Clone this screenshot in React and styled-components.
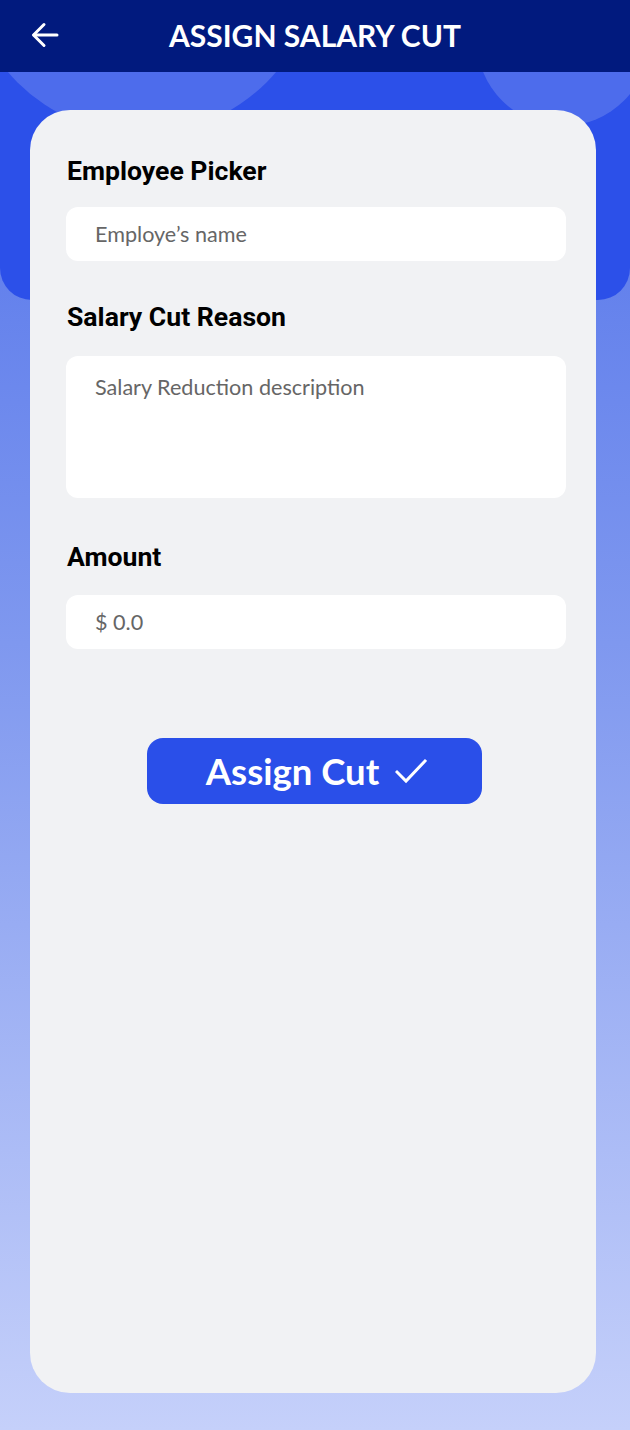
import React from "react";
import styled, { createGlobalStyle } from "styled-components";

const Global = createGlobalStyle`
  * { box-sizing: border-box; }
  html, body { margin: 0; padding: 0; }
  body { font-family: "Lato", "Roboto", sans-serif; }
`;

const Page = styled.div`
  width: 630px;
  min-height: 1430px;
  background: linear-gradient(180deg, #4f70ea 0%, #7f98ef 45%, #c5d0fa 100%);
  display: flex;
  flex-direction: column;
  overflow: hidden;
`;

const Header = styled.header`
  height: 72px;
  background: #011a7e;
  display: grid;
  grid-template-columns: 80px 1fr 80px;
  align-items: center;
  position: relative;
  z-index: 2;
`;

const BackButton = styled.button`
  border: 0;
  background: none;
  padding: 0 0 2px 30px;
  display: flex;
  align-items: center;
  cursor: pointer;
`;

const Title = styled.h1`
  margin: 0 0 2px;
  text-align: center;
  color: #fff;
  font-family: "Lato", sans-serif;
  font-weight: 700;
  font-size: 30px;
  line-height: 36px;
`;

const Body = styled.main`
  position: relative;
  flex: 1;
  padding: 38px 34px 37px 30px;
  display: flex;
`;

const Blob = styled.div`
  position: absolute;
  left: 0;
  right: 0;
  top: 0;
  height: 228px;
  background: #2c50e9;
  border-radius: 0 0 32px 32px;
  overflow: hidden;
  z-index: 0;
`;

const Circle = styled.div`
  position: absolute;
  border-radius: 50%;
  background: rgba(255, 255, 255, 0.16);
  left: ${(p) => p.$x - p.$r}px;
  top: ${(p) => p.$y - p.$r}px;
  width: ${(p) => p.$r * 2}px;
  height: ${(p) => p.$r * 2}px;
`;

const Card = styled.section`
  position: relative;
  z-index: 1;
  flex: 1;
  background: #f1f2f4;
  border-radius: 40px;
  padding: 46px 30px 0 36px;
  display: flex;
  flex-direction: column;
`;

const Label = styled.label`
  font-family: "Roboto", sans-serif;
  font-weight: 700;
  font-size: 26.6px;
  line-height: 30px;
  color: #000;
  margin: ${(p) => p.$top || 0}px 0 ${(p) => p.$bottom || 22}px 1px;
`;

const Field = styled.div`
  width: 500px;
  height: ${(p) => p.$h}px;
  background: #fff;
  border-radius: 12px;
  padding: ${(p) => (p.$multi ? "18px 29px" : "0 29px")};
  display: flex;
  align-items: ${(p) => (p.$multi ? "flex-start" : "center")};
  font-family: "Lato", sans-serif;
  font-size: 21.6px;
  line-height: 26px;
  color: #666;
`;

const ButtonRow = styled.div`
  display: flex;
  justify-content: center;
  margin-top: 89px;
  padding-right: 3px;
`;

const PrimaryButton = styled.button`
  width: 335px;
  height: 66px;
  border: 0;
  border-radius: 16px;
  background: #2a4fe9;
  color: #fff;
  font-family: "Lato", sans-serif;
  font-weight: 700;
  font-size: 36.5px;
  display: flex;
  align-items: center;
  justify-content: center;
  gap: 16px;
  padding: 0 0 0 4px;
  cursor: pointer;
`;

export default function App() {
  return (
    <Page>
      <Global />
      <Header>
        <BackButton aria-label="Back">
          <svg width="30" height="30" viewBox="0 0 30 30" fill="none" stroke="#fff" strokeWidth="3" strokeLinecap="round" strokeLinejoin="round">
            <path d="M27 15H4" />
            <path d="M14 4.5L3.5 15L14 25.5" />
          </svg>
        </BackButton>
        <Title>ASSIGN SALARY CUT</Title>
        <div />
      </Header>
      <Body>
        <Blob>
          <Circle $x={142} $y={-114} $r={176} />
          <Circle $x={563} $y={-32} $r={86} />
        </Blob>
        <Card>
          <Label $bottom={21}>Employee Picker</Label>
          <Field $h={54}>Employe’s name</Field>
          <Label $top={41} $bottom={24}>Salary Cut Reason</Label>
          <Field $h={142} $multi>Salary Reduction description</Field>
          <Label $top={44} $bottom={23}>Amount</Label>
          <Field $h={54}>$ 0.0</Field>
          <ButtonRow>
            <PrimaryButton>
              Assign Cut
              <svg width="32" height="26" viewBox="0 0 32 26" fill="none" stroke="#fff" strokeWidth="3" strokeLinecap="square">
                <path d="M2 14L11 23L30 3" />
              </svg>
            </PrimaryButton>
          </ButtonRow>
        </Card>
      </Body>
    </Page>
  );
}
